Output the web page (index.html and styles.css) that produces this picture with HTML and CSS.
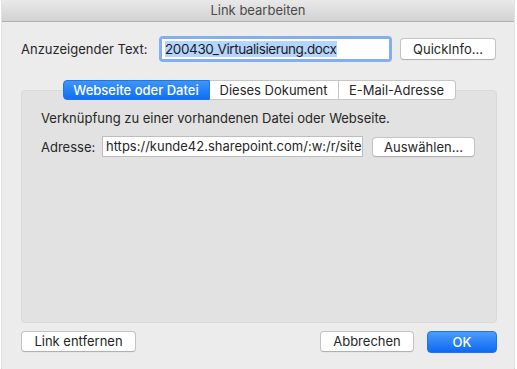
FILE: index.html
```html
<!DOCTYPE html>
<html lang="de">
<head>
    <meta charset="UTF-8">
    <title>Link bearbeiten</title>
    <link rel="stylesheet" href="styles.css">
</head>
<body>
    <div class="window">
        <div class="titlebar">Link bearbeiten</div>
        <div class="content">
            <div class="row-text">
                <label class="label label-text">Anzuzeigender Text:</label>
                <div class="focus-field">
                    <div class="field"><span class="selection">200430_Virtualisierung.docx</span></div>
                </div>
                <button class="btn btn-quick">QuickInfo...</button>
            </div>

            <div class="tabs">
                <div class="tab active">Webseite oder Datei</div>
                <div class="tab">Dieses Dokument</div>
                <div class="tab">E-Mail-Adresse</div>
            </div>
            <div class="panel">
                <p class="hint">Verknüpfung zu einer vorhandenen Datei oder Webseite.</p>
                <div class="row-address">
                    <label class="label label-address">Adresse:</label>
                    <div class="address">https://kunde42.sharepoint.com/:w:/r/sites</div>
                    <button class="btn btn-choose">Auswählen...</button>
                </div>
            </div>

            <div class="footer">
                <button class="btn btn-remove">Link entfernen</button>
                <div class="spacer"></div>
                <button class="btn btn-cancel">Abbrechen</button>
                <button class="btn btn-ok">OK</button>
            </div>
        </div>
    </div>
</body>
</html>
```

FILE: styles.css
```css
body {
    margin: 0;
    background-color: #ffffff;
    font-family: Inter, "Noto Sans", sans-serif;
    font-size: 13px;
    color: #262626;
}
.window {
    margin-left: 1px;
    width: 514px;
    height: 369px;
    background-color: #ececec;
    border-left: 1px dotted #d6d6d6;
    border-right: 1px dotted #d6d6d6;
    box-sizing: border-box;
}
.titlebar {
    height: 21px;
    line-height: 21px;
    text-align: center;
    color: #4a4a4a;
    background: linear-gradient(#e9e9e9, #d2d2d2);
    border-bottom: 1px solid #b1b1b1;
    border-radius: 5px 5px 0 0;
}
.content {
    padding: 14px 17px 0 19px;
}
.label {
    white-space: nowrap;
}
.label-text {
    width: 138px;
}
.label-address {
    width: 61px;
}
.row-text {
    display: flex;
    align-items: center;
    height: 26px;
}
.focus-field {
    width: 233px;
    height: 26px;
    box-sizing: border-box;
    padding: 3px;
    border-radius: 4px;
    background-color: #85aef0;
}
.field {
    height: 20px;
    background-color: #ffffff;
    padding-left: 3px;
    font-size: 13.5px;
    letter-spacing: -0.4px;
    line-height: 20px;
    white-space: nowrap;
    overflow: hidden;
}
.selection {
    background-color: #b4d5fe;
    color: #1a1a1a;
}
.btn {
    font-family: inherit;
    font-size: 13px;
    color: #262626;
    background-color: #ffffff;
    border: 1px solid #c3c3c3;
    border-bottom-color: #b0b0b0;
    border-radius: 4px;
    padding: 0;
    height: 21px;
    line-height: 19px;
    text-align: center;
    box-shadow: 0 0.5px 0 rgba(0, 0, 0, 0.05);
}
.btn-quick {
    margin-left: 8px;
    width: 96px;
    height: 22px;
}
.tabs {
    display: flex;
    justify-content: center;
    margin-top: 18px;
    margin-bottom: -10px;
    position: relative;
    z-index: 1;
}
.tab {
    height: 20px;
    line-height: 18px;
    text-align: center;
    background-color: #ffffff;
    border: 1px solid #c6c6c6;
    border-left: none;
    box-sizing: border-box;
}
.tab:first-child {
    border-left: 1px solid #c6c6c6;
    border-radius: 4px 0 0 4px;
}
.tab:last-child {
    border-radius: 0 4px 4px 0;
}
.tab.active {
    color: #ffffff;
    font-weight: 500;
    background: linear-gradient(#3f96f7, #0f6ef4);
    border-color: #1d74ef;
    width: 147px;
}
.tab:nth-child(2) {
    width: 129px;
}
.tab:nth-child(3) {
    width: 117px;
}
.panel {
    height: 233px;
    box-sizing: border-box;
    background-color: #e2e2e2;
    border: 1px solid #d9d9d9;
    border-radius: 4px;
    padding: 19px 19px 0 19px;
}
.hint {
    margin: 0;
    line-height: 16px;
}
.row-address {
    display: flex;
    align-items: center;
    margin-top: 10px;
}
.address {
    width: 261px;
    height: 21px;
    box-sizing: border-box;
    background-color: #ffffff;
    border: 1px solid #bdbdbd;
    padding-left: 3px;
    line-height: 19px;
    white-space: nowrap;
    overflow: hidden;
}
.btn-choose {
    margin-left: 9px;
    width: 103px;
    height: 20px;
    line-height: 18px;
}
.footer {
    display: flex;
    margin-top: 8px;
}
.spacer {
    flex: 1;
}
.btn-remove {
    width: 115px;
}
.btn-cancel {
    width: 94px;
}
.btn-ok {
    margin-left: 13px;
    width: 70px;
    height: 22px;
    color: #ffffff;
    font-weight: 500;
    background: linear-gradient(#4c9cf8, #0d6af4);
    border-color: #1f74ef;
}
```
